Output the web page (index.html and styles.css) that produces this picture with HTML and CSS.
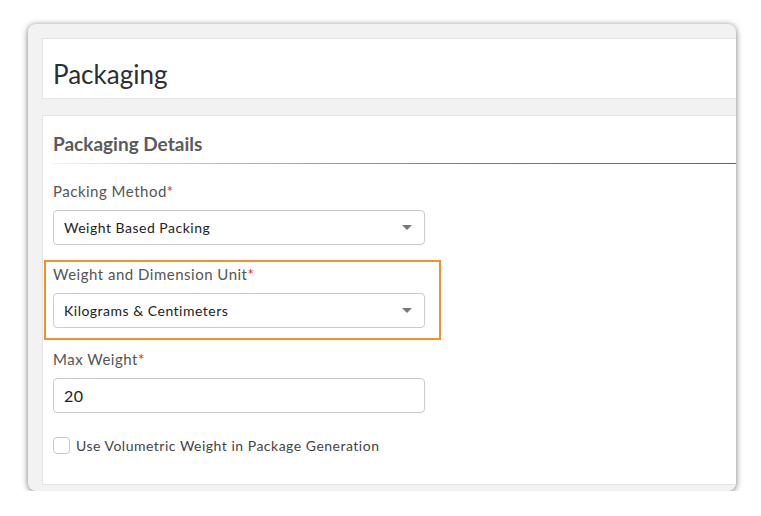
FILE: index.html
```html
<!DOCTYPE html>
<html>
<head>
<meta charset="utf-8">
<link rel="stylesheet" href="styles.css">
</head>
<body>
<div class="window">
  <div class="card title-card">
    <h1 class="page-title">Packaging</h1>
  </div>
  <div class="card details-card">
    <h2 class="section-title">Packaging Details</h2>
    <div class="rule"></div>
    <div class="field first-field">
      <div class="label">Packing Method<span class="req">*</span></div>
      <div class="select"><span>Weight Based Packing</span><span class="caret"></span></div>
    </div>
    <div class="highlight">
      <div class="field">
        <div class="label">Weight and Dimension Unit<span class="req">*</span></div>
        <div class="select"><span>Kilograms &amp; Centimeters</span><span class="caret"></span></div>
      </div>
    </div>
    <div class="field after-highlight">
      <div class="label">Max Weight<span class="req">*</span></div>
      <div class="select input"><span>20</span></div>
    </div>
    <label class="check">
      <span class="box"></span>
      <span>Use Volumetric Weight in Package Generation</span>
    </label>
  </div>
</div>
</body>
</html>
```

FILE: styles.css
```css
html, body {
  margin: 0;
  padding: 0;
  background: #ffffff;
}
body {
  font-family: Lato, "Open Sans", sans-serif;
  padding: 24px 0 0 28px;
}
.window {
  width: 708px;
  height: 467px;
  background: #f2f2f2;
  border-radius: 8px;
  box-shadow: 0 1px 6px rgba(0, 0, 0, 0.55);
  overflow: hidden;
  padding: 14px 0 0 14px;
  box-sizing: border-box;
  display: flex;
  flex-direction: column;
  gap: 16px;
}
.card {
  background: #ffffff;
  border: 1px solid #e4e4e4;
  width: 720px;
  box-sizing: border-box;
  flex: none;
}
.title-card {
  height: 61px;
  padding: 0 10px;
  display: flex;
  align-items: center;
}
.page-title {
  margin: 10px 0 0 0;
  font-size: 26px;
  font-weight: 400;
  color: #2e2e2e;
}
.details-card {
  height: 370px;
  padding: 16px 10px 0 10px;
}
.section-title {
  margin: 0;
  font-size: 19px;
  font-weight: 700;
  color: #5a5a5a;
  line-height: 24px;
}
.rule {
  height: 1px;
  margin: 7px -10px 0 0;
  background-color: #ffffff;
  background-image: linear-gradient(to right, #eef3f9, #9bbde3 25%, #3f86d4 60%, #1f6ec4);
}
.field {
  width: 372px;
}
.first-field {
  margin-top: 17px;
}
.label {
  font-size: 15px;
  color: #555555;
  line-height: 20px;
  letter-spacing: 0.5px;
}
.req {
  color: #e0262b;
}
.select {
  margin-top: 9px;
  height: 35px;
  border: 1px solid #cccccc;
  border-radius: 4px;
  box-sizing: border-box;
  display: flex;
  align-items: center;
  justify-content: space-between;
  padding: 0 12px 0 10px;
  font-size: 14px;
  color: #222222;
  letter-spacing: 0.5px;
}
.input {
  font-size: 16px;
}
.caret {
  width: 0;
  height: 0;
  border-left: 5px solid transparent;
  border-right: 5px solid transparent;
  border-top: 5px solid #777777;
}
.highlight {
  margin: 15px 0 0 -9px;
  width: 397px;
  height: 80px;
  box-sizing: border-box;
  border: 2px solid #f0922e;
  padding: 2px 0 0 7px;
}
.after-highlight {
  margin-top: 9px;
}
.check {
  margin-top: 24px;
  display: flex;
  align-items: center;
  gap: 6px;
  font-size: 14px;
  color: #444444;
  letter-spacing: 0.5px;
}
.box {
  width: 17px;
  height: 17px;
  border: 1px solid #c8c8c8;
  border-radius: 4px;
  box-sizing: border-box;
}
```
